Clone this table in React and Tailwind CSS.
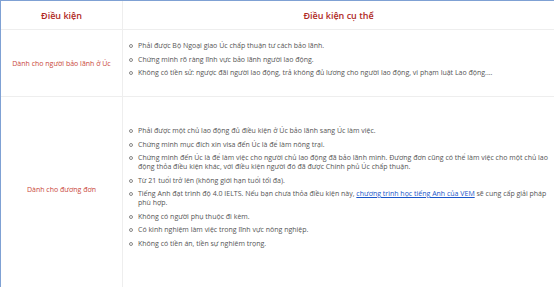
export default function App() {
  const font = { fontFamily: '"Open Sans", sans-serif' };
  const Item = ({ children }) => (
    <li className="flex gap-[5px] mb-[4.5px]">
      <span className="mt-[3px] w-[4px] h-[4px] shrink-0 rounded-full border border-[#888]" />
      <span>{children}</span>
    </li>
  );
  return (
    <div className="w-[554px] h-[287px] overflow-hidden bg-white" style={font}>
      <div className="border-t border-l border-[#7fa1d4] text-[#555] text-[7px] leading-[9px]">
        <div className="grid grid-cols-[122px_1fr] border-b border-[#eee] h-[29px]">
          <div className="border-r border-[#eee] flex items-center justify-center text-[9px] font-semibold text-[#b02a25]">Điều kiện</div>
          <div className="flex items-center justify-center text-[9px] font-semibold text-[#b02a25]">Điều kiện cụ thể</div>
        </div>
        <div className="grid grid-cols-[122px_1fr] border-b border-[#eee] h-[67px]">
          <div className="border-r border-[#eee] flex items-center justify-center text-[#c9473b]">Dành cho người bảo lãnh ở Úc</div>
          <ul className="pl-[6px] pr-[4px] pt-[11px]">
            <Item>Phải được Bộ Ngoại giao Úc chấp thuận tư cách bảo lãnh.</Item>
            <Item>Chứng minh rõ ràng lĩnh vực bảo lãnh người lao động.</Item>
            <Item>Không có tiền sử: ngược đãi người lao động, trả không đủ lương cho người lao động, vi phạm luật Lao động....</Item>
          </ul>
        </div>
        <div className="grid grid-cols-[122px_1fr] h-[200px]">
          <div className="border-r border-[#eee] flex justify-center pt-[88px] text-[#c9473b]">Dành cho đương đơn</div>
          <ul className="pl-[6px] pr-[4px] pt-[29px]">
            <Item>Phải được một chủ lao động đủ điều kiện ở Úc bảo lãnh sang Úc làm việc.</Item>
            <Item>Chứng minh mục đích xin visa đến Úc là để làm nông trại.</Item>
            <Item>Chứng minh đến Úc là để làm việc cho người chủ lao động đã bảo lãnh mình. Đương đơn cũng có thể làm việc cho một chủ lao động thỏa điều kiện khác, với điều kiện người đó đã được Chính phủ Úc chấp thuận.</Item>
            <Item>Từ 21 tuổi trở lên (không giới hạn tuổi tối đa).</Item>
            <Item>Tiếng Anh đạt trình độ 4.0 IELTS. Nếu bạn chưa thỏa điều kiện này, <a className="text-[#1a56c9] underline">chương trình học tiếng Anh của VEM</a> sẽ cung cấp giải pháp phù hợp.</Item>
            <Item>Không có người phụ thuộc đi kèm.</Item>
            <Item>Có kinh nghiệm làm việc trong lĩnh vực nông nghiệp.</Item>
            <Item>Không có tiền án, tiền sự nghiêm trọng.</Item>
          </ul>
        </div>
      </div>
    </div>
  );
}
